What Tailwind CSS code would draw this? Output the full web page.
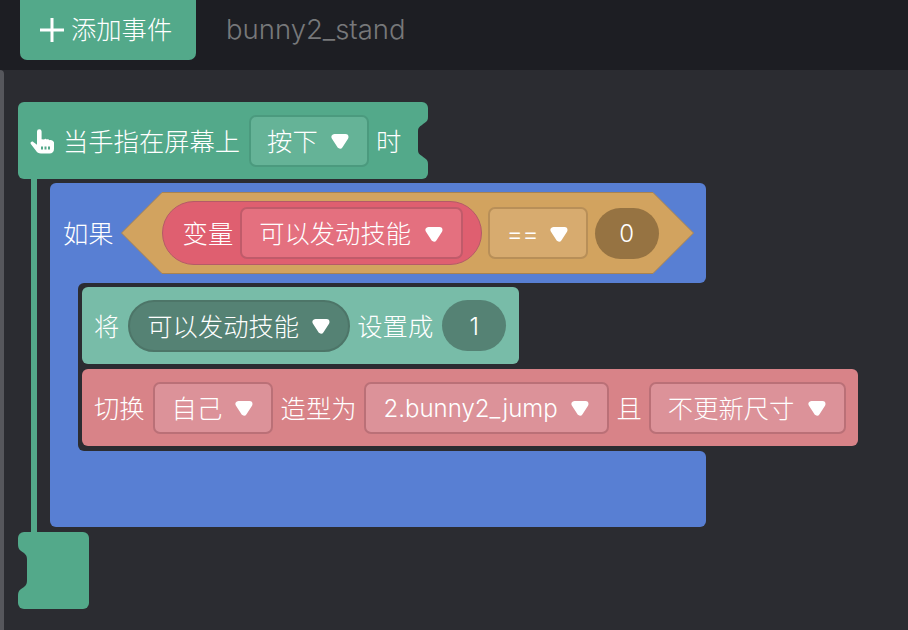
<!DOCTYPE html>
<html lang="zh">
<head>
  <meta charset="UTF-8" />
  <title>bunny2_stand</title>
  <script src="https://cdn.jsdelivr.net/npm/@tailwindcss/browser@4"></script>
</head>
<body class="bg-[#2b2c31] text-white font-['Inter','Noto_Sans_CJK_SC',sans-serif] font-light text-[25.3px] leading-none overflow-hidden">
  <div class="w-[908px] h-[630px] overflow-hidden flex flex-col">
    <!-- Top bar -->
    <header class="h-[70px] shrink-0 bg-[#1d1e23] flex items-start pl-[20px]">
      <button class="w-[176px] h-[60px] bg-[#53a98a] rounded-b-[7px] flex items-center pl-[20px] gap-[7px]">
        <svg width="24" height="24" viewBox="0 0 24 24" class="shrink-0"><path d="M12 0v24M0 12h24" stroke="#fff" stroke-width="3"/></svg>
        <span>添加事件</span>
      </button>
      <span class="ml-[30px] h-[60px] flex items-center text-[#77787a] text-[27.5px]">bunny2_stand</span>
    </header>

    <!-- Workspace -->
    <main class="relative flex-1 pl-[18px] pt-[32px]">
      <div class="absolute left-0 top-0 w-[4px] h-full bg-[#56575c] rounded-tr-[4px]"></div>

      <!-- Hat block -->
      <div class="relative w-[410px] h-[77px] bg-[#53a98a] rounded-[6px] flex items-center pl-[12px]">
        <svg width="26" height="26" viewBox="0 0 26 26" class="shrink-0 mr-[7px] mt-[2px]">
          <path d="M7 2.500a2.300 2.300 0 0 1 4.600 0v7.700l2.600.3c.4-.9 2-.9 2.500.1.7-.6 2.200-.3 2.600.6 2.100-.5 4.200.4 4.700 2.400v6.400c0 2.800-1.800 4.500-4.500 4.500h-8.500c-2.500 0-3.800-1-5-2.800l-5.200-6.800c-1-1.400 1-3.200 2.500-2l3.700 2.800z" fill="#fff"/>
          <path d="M12 17.500v3M15.500 17.500v3M19 17.500v3" stroke="#53a98a" stroke-width="2"/>
        </svg>
        <span class="mt-[2px]">当手指在屏幕上</span>
        <div class="ml-[9px] w-[120px] h-[52px] bg-[#65b397] border-2 border-[#4b9a7e] rounded-[7px] flex items-center justify-between pl-[16px] pr-[18px]">
          <span class="mt-[2px]">按下</span>
          <svg width="18" height="15" viewBox="0 0 18 15" class="mt-[2px]"><path d="M3.500 3h11L9 11.500z" fill="#fff" stroke="#fff" stroke-width="6" stroke-linejoin="round"/></svg>
        </div>
        <span class="ml-[7px] mt-[2px]">时</span>
        <svg width="10" height="47" viewBox="0 0 10 47" class="absolute right-0 top-[15px]"><path d="M10 0C10 5 7 5 4 8 1 10 0 11 0 14V33C0 36 1 37 4 39 7 42 10 42 10 47z" fill="#2b2c31"/></svg>
      </div>

      <!-- Stem and if block -->
      <div class="flex h-[353px]">
        <div class="ml-[13px] w-[6px] bg-[#53a98a]"></div>
        <div class="ml-[13px] mt-[4px] w-[808px]">
          <div class="w-[656px] h-[100px] bg-[#587fd3] rounded-t-[6px] rounded-br-[6px] flex items-center pl-[13px]">
            <span class="mt-[2px]">如果</span>
            <div class="relative ml-[7px] w-[573px] h-[82px] flex items-center">
              <svg width="573" height="82" viewBox="0 0 573 82" class="absolute inset-0"><path d="M41 .5H532L572.500 41 532 81.500H41L.5 41z" fill="#d2a35f" stroke="#a98350"/></svg>
              <div class="relative ml-[41px] w-[320px] h-[64px] bg-[#df5f70] border border-[#b55a68] rounded-full flex items-center pl-[20px]">
                <span class="mt-[2px]">变量</span>
                <div class="ml-[7px] w-[223px] h-[52px] bg-[#e4707f] border-2 border-[#c05b6a] rounded-[7px] flex items-center justify-between pl-[17px] pr-[18px]">
                  <span class="mt-[2px]">可以发动技能</span>
                  <svg width="18" height="15" viewBox="0 0 18 15" class="mt-[2px]"><path d="M3.500 3h11L9 11.500z" fill="#fff" stroke="#fff" stroke-width="6" stroke-linejoin="round"/></svg>
                </div>
              </div>
              <div class="relative ml-[6px] w-[100px] h-[52px] bg-[#d7ab6f] border-2 border-[#b88f58] rounded-[7px] flex items-center justify-between pl-[17px] pr-[18px]">
                <span class="mt-[2px] tracking-[-1px]">==</span>
                <svg width="18" height="15" viewBox="0 0 18 15" class="mt-[2px]"><path d="M3.500 3h11L9 11.500z" fill="#fff" stroke="#fff" stroke-width="6" stroke-linejoin="round"/></svg>
              </div>
              <div class="relative ml-[7px] w-[64px] h-[51px] bg-[#967342] rounded-full flex items-center justify-center text-[24px]"><span class="mt-[2px]">0</span></div>
            </div>
          </div>
          <div class="flex h-[168px]">
            <div class="w-[34px] bg-[#587fd3]"></div>
            <div class="relative -ml-[6px] flex-1 bg-[#2b2c31] rounded-l-[6px] pl-[4px] pt-[4px]">
              <div class="w-[437px] h-[77px] bg-[#78bca8] rounded-[6px] flex items-center pl-[12px]">
                <span class="mt-[2px]">将</span>
                <div class="ml-[9px] w-[222px] h-[52px] bg-[#558274] border-2 border-[#4d7568] rounded-full flex items-center justify-between pl-[17px] pr-[18px]">
                  <span class="mt-[2px]">可以发动技能</span>
                  <svg width="18" height="15" viewBox="0 0 18 15" class="mt-[2px]"><path d="M3.500 3h11L9 11.500z" fill="#fff" stroke="#fff" stroke-width="6" stroke-linejoin="round"/></svg>
                </div>
                <span class="ml-[7px] mt-[2px]">设置成</span>
                <div class="ml-[9px] w-[64px] h-[51px] bg-[#558274] rounded-full flex items-center justify-center text-[24px]"><span class="mt-[2px]">1</span></div>
              </div>
              <div class="mt-[5px] w-[776px] h-[77px] bg-[#d88388] rounded-[6px] flex items-center pl-[12px]">
                <span class="mt-[2px]">切换</span>
                <div class="ml-[8px] w-[120px] h-[52px] bg-[#dc9299] border-2 border-[#ba7077] rounded-[7px] flex items-center justify-between pl-[17px] pr-[18px]">
                  <span class="mt-[2px]">自己</span>
                  <svg width="18" height="15" viewBox="0 0 18 15" class="mt-[2px]"><path d="M3.500 3h11L9 11.500z" fill="#fff" stroke="#fff" stroke-width="6" stroke-linejoin="round"/></svg>
                </div>
                <span class="ml-[8px] mt-[2px]">造型为</span>
                <div class="ml-[7px] w-[245px] h-[52px] bg-[#dc9299] border-2 border-[#ba7077] rounded-[7px] flex items-center justify-between pl-[18px] pr-[18px]">
                  <span class="mt-[2px] text-[24px]">2.bunny2_jump</span>
                  <svg width="18" height="15" viewBox="0 0 18 15" class="mt-[2px]"><path d="M3.500 3h11L9 11.500z" fill="#fff" stroke="#fff" stroke-width="6" stroke-linejoin="round"/></svg>
                </div>
                <span class="ml-[8px] mt-[2px]">且</span>
                <div class="ml-[7px] w-[197px] h-[52px] bg-[#dc9299] border-2 border-[#ba7077] rounded-[7px] flex items-center justify-between pl-[17px] pr-[18px]">
                  <span class="mt-[2px]">不更新尺寸</span>
                  <svg width="18" height="15" viewBox="0 0 18 15" class="mt-[2px]"><path d="M3.500 3h11L9 11.500z" fill="#fff" stroke="#fff" stroke-width="6" stroke-linejoin="round"/></svg>
                </div>
              </div>
            </div>
          </div>
          <div class="w-[656px] h-[76px] bg-[#587fd3] rounded-b-[6px] rounded-tr-[6px]"></div>
        </div>
      </div>

      <!-- Foot of hat block -->
      <div class="relative w-[71px] h-[77px] bg-[#53a98a] rounded-[6px]">
        <svg width="9" height="52" viewBox="0 0 9 52" class="absolute left-0 top-[12px]"><path d="M0 0C0 6 3 7 6 9 8 11 9 12 9 16V36C9 40 8 41 6 43 3 45 0 46 0 52z" fill="#2b2c31"/></svg>
      </div>
    </main>
  </div>
</body>
</html>
